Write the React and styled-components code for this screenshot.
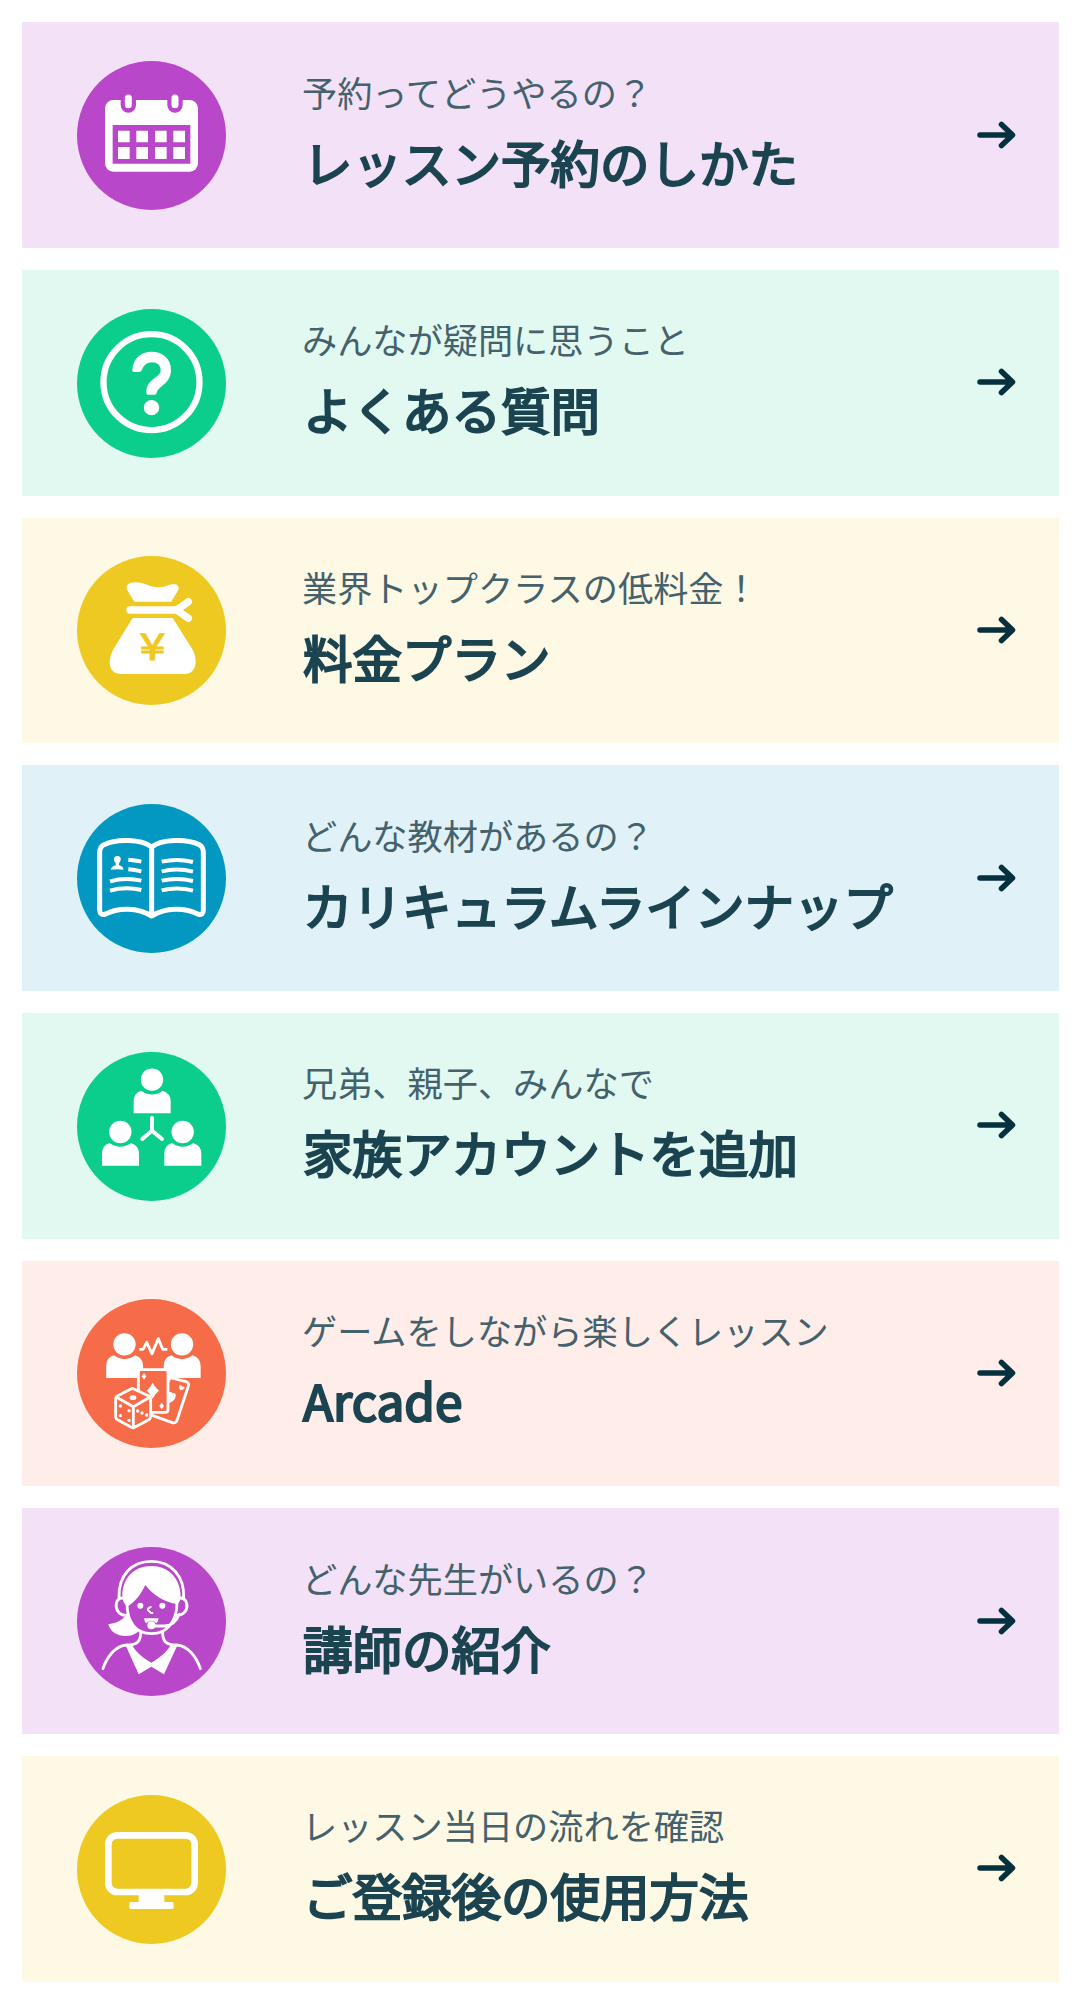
import styled, { createGlobalStyle } from "styled-components";

const GlobalStyle = createGlobalStyle`
  * {
    box-sizing: border-box;
  }

  body {
    margin: 0;
    background-color: #fff;
    font-family: "Noto Sans CJK JP", "Noto Sans", sans-serif;
  }
`;

const MenuList = styled.nav`
  display: flex;
  flex-direction: column;
  gap: 22px;
  padding: 22.3px 21px 22px 22px;
`;

const MenuItem = styled.a`
  display: flex;
  align-items: center;
  height: 225.7px;
  padding: 0 42px 0 55px;
  background-color: ${(props) => props.$background};
  color: #1b4450;
  text-decoration: none;
`;

const IconCircle = styled.svg`
  flex: none;
  width: 149px;
  height: 149px;
  margin-top: 0.8px;
  margin-right: 76px;
  border-radius: 50%;
  background-color: ${(props) => props.$color};
  color: ${(props) => props.$color};
`;

const TextBlock = styled.div`
  flex: 1;
  padding-bottom: 1px;
  white-space: nowrap;
`;

const Lead = styled.p`
  margin: 0;
  font-size: 35.2px;
  line-height: 60px;
  color: #44616c;
`;

/* Regular outlines thickened with a stroke, the bold cut is too wide */
const Title = styled.h2`
  margin: 0;
  padding: 0 0 6px 1px;
  font-size: 49.5px;
  font-weight: 400;
  line-height: 80px;
  -webkit-text-stroke: 2.2px currentColor;
`;

const Arrow = styled.svg`
  flex: none;
  width: 40px;
  height: 30px;
  margin-bottom: 1px;
`;

function CalendarIcon() {
  return (
    <>
      <rect x="105" y="144" width="279" height="215" rx="25" fill="#fff" />
      <path
        d="M175 128V159M315 128V159"
        stroke="currentColor"
        strokeWidth="46"
        strokeLinecap="round"
      />
      <path
        d="M175 138V158M315 138V158"
        stroke="#fff"
        strokeWidth="21"
        strokeLinecap="round"
      />
      <path d="M128 219H361V335H128Z" fill="currentColor" />
      {[144, 199, 255, 310].map((x) => (
        <path
          key={x}
          d={`M${x} 236h35v35h-35zM${x} 285h35v36h-35z`}
          fill="#fff"
        />
      ))}
    </>
  );
}

function QuestionIcon() {
  return (
    <>
      <circle
        cx="244.5"
        cy="246.5"
        r="144"
        fill="none"
        stroke="#fff"
        strokeWidth="19"
      />
      <path
        d="M187 208C190 175 212 155 245 155C280 155 303 178 303 210C303 234 290 246 279 256C266 266 262 271 260 279Q259 284 254 284H234Q229 284 229 278C229 260 235 249 249 238C262 228 272 223 272 210C272 196 261 187 246 187C231 187 222 195 215 211Q213 216 207 216H192Q186 216 187 208Z"
        fill="#fff"
      />
      <circle cx="244.5" cy="323" r="23" fill="#fff" />
    </>
  );
}

function MoneyIcon() {
  return (
    <>
      <path
        d="M193 170L172 136C165 121 176 112 195 112C225 112 240 128 268 127C288 126 298 117 312 117Q328 119 326 133L304 170ZM188 219H308L367 313Q377 330 377 350Q375 386 343 387H154Q119 386 119 350Q120 330 130 313Z"
        fill="#fff"
      />
      <path
        d="M180 195H322M355 170L320 195L355 220"
        fill="none"
        stroke="#fff"
        strokeWidth="22"
        strokeLinecap="round"
        strokeLinejoin="round"
      />
      <text
        transform="translate(247.5 344) scale(1.25 1)"
        textAnchor="middle"
        fontFamily="Noto Sans CJK JP, sans-serif"
        fontSize="112"
        fontWeight="400"
        fill="currentColor"
        stroke="currentColor"
        strokeWidth="3"
      >
        ¥
      </text>
    </>
  );
}

function BookIcon() {
  return (
    <>
      <path
        d="M245 156C215 132 140 130 102 149Q89 156 89 172V346Q90 361 105 358C145 337 203 337 245 363C287 337 345 337 385 358Q400 361 400 346V172Q400 156 388 149C350 130 275 132 245 156V363"
        fill="none"
        stroke="#fff"
        strokeWidth="15"
        strokeLinejoin="round"
      />
      <path
        d="M175 194Q195 196 214 200M175 223Q195 225 214 229M120 259Q167 246 214 257M120 287Q167 274 214 285M275 200Q322 189 369 201M275 229Q322 218 369 230M275 257Q322 246 369 258M275 286Q322 275 369 287"
        fill="none"
        stroke="#fff"
        strokeWidth="12"
      />
      <path
        d="M123 224Q123 215 137 211V205C127 192 133 183 142 183C152 183 157 192 147 205V211Q161 215 160 224Q142 221 123 224Z"
        fill="#fff"
      />
    </>
  );
}

function Person({ x, y }) {
  return (
    <g transform={`translate(${x} ${y})`} fill="#fff">
      <circle r="33.500" />
      <path d="M-55 101V65Q-55 40 -32 33Q0 56 32 33Q56 41 56 65V101Z" />
    </g>
  );
}

function FamilyIcon() {
  return (
    <>
      <Person x={246} y={119} />
      <Person x={151} y={276} />
      <Person x={338} y={276} />
      <path
        d="M246 234V272L217 297M246 272L276 297"
        fill="none"
        stroke="#fff"
        strokeWidth="12"
        strokeLinecap="round"
      />
    </>
  );
}

function ArcadeIcon() {
  return (
    <>
      <Person x={163.500} y={163} />
      <Person x={336} y={163} />
      <path
        d="M208 178H219L230 157L246 191L265 146L278 178H292"
        fill="none"
        stroke="#fff"
        strokeWidth="8.500"
        strokeLinejoin="round"
      />
      <g
        fill="currentColor"
        stroke="#fff"
        strokeWidth="8.500"
        strokeLinejoin="round"
      >
        <path d="M301 263L348 275Q358 278 355 288L321 391Q317 401 307 398L240 374Z" />
        <rect x="205" y="239" width="89" height="128" rx="8" />
        <path d="M187 295L235 317Q242 320 242 328V378Q242 386 235 390L194 412Q190 415 184 412L144 390Q137 387 137 380V326Q137 320 143 317Z" />
        <path d="M140 322L190 350L239 322M190 350V412" fill="none" />
      </g>
      <g fill="#fff">
        <path d="M248 278Q255 292 267 302Q255 311 248 326Q241 311 230 302Q242 291 248 278ZM222 249L229 259L222 269L215 259ZM275 338L282 348L275 358L268 348ZM327 287Q334 283 336 290Q344 288 344 294Q342 299 331 301Q326 294 327 287ZM297 307Q305 304 307 309Q319 307 317 319Q314 334 297 340Z" />
        <ellipse cx="189" cy="323" rx="10" ry="7" />
        <circle cx="151" cy="348" r="5" />
        <circle cx="177" cy="362" r="5" />
        <circle cx="151" cy="377" r="5" />
        <circle cx="177" cy="391" r="5" />
        <circle cx="203" cy="363" r="5" />
        <circle cx="216" cy="369" r="5" />
        <circle cx="230" cy="375" r="5" />
      </g>
    </>
  );
}

function TeacherIcon() {
  return (
    <>
      <path
        d="M176 212C166 214 157 200 157 183C157 128 193 93 244 93C296 93 332 130 332 186Q331 201 322 207C284 202 249 181 226 150C212 180 196 199 176 212ZM169 238C156 259 135 265 115 268C122 293 144 304 169 303C188 302 199 295 207 287C191 273 182 258 175 240ZM165 327H185C195 349 217 368 244 383C270 368 293 349 304 327H324L282 418L244 395L206 418Z"
        fill="#fff"
      />
      <path
        d="M147 190C144 119 187 79 244 79C302 79 344 121 341 190M157 189C137 190 134 215 144 229C151 239 160 242 172 240M332 189C353 191 355 217 345 230Q336 242 318 240M171 205C171 262 197 296 245 296C291 296 320 260 321 205M328 238C317 265 302 273 283 273H244M212 289C213 317 204 330 170 330C137 332 111 365 99 401M278 289C277 317 286 330 320 330C353 332 379 365 391 401"
        fill="none"
        stroke="#fff"
        strokeWidth="8.500"
        strokeLinecap="round"
      />
      <path
        d="M242 216C234 219 232 224 235 227C240 227 240 236 247 234"
        fill="none"
        stroke="#fff"
        strokeWidth="6"
        strokeLinecap="round"
      />
      <path
        d="M222 250H266Q265 259 260 265Q244 249 228 265Q223 259 222 250Z"
        fill="#fff"
      />
      <circle cx="244" cy="271" r="12" fill="#fff" />
      <circle cx="211" cy="212" r="9" fill="#fff" />
      <circle cx="277" cy="212" r="9" fill="#fff" />
    </>
  );
}

function MonitorIcon() {
  return (
    <>
      <rect
        x="115"
        y="151"
        width="259"
        height="170"
        rx="27"
        fill="none"
        stroke="#fff"
        strokeWidth="20"
      />
      <path
        d="M206 328H283V351H306Q311 351 311 356V367Q311 372 306 372H183Q178 372 178 367V356Q178 351 183 351H206Z"
        fill="#fff"
      />
    </>
  );
}

const menuItems = [
  {
    lead: "予約ってどうやるの？",
    title: "レッスン予約のしかた",
    Icon: CalendarIcon,
    viewBox: "21 27 447 447",
    color: "#b947c9",
    background: "#f3e1f7",
  },
  {
    lead: "みんなが疑問に思うこと",
    title: "よくある質問",
    Icon: QuestionIcon,
    viewBox: "21 27 447 447",
    color: "#0cce8c",
    background: "#e1f9f1",
  },
  {
    lead: "業界トップクラスの低料金！",
    title: "料金プラン",
    Icon: MoneyIcon,
    viewBox: "21 33 447 447",
    color: "#edc922",
    background: "#fef9e4",
  },
  {
    lead: "どんな教材があるの？",
    title: "カリキュラムラインナップ",
    Icon: BookIcon,
    viewBox: "21 27 447 447",
    color: "#0298c1",
    background: "#e0f1f8",
  },
  {
    lead: "兄弟、親子、みんなで",
    title: "家族アカウントを追加",
    Icon: FamilyIcon,
    viewBox: "21 36 447 447",
    color: "#0cce8c",
    background: "#e1f9f1",
  },
  {
    lead: "ゲームをしながら楽しくレッスン",
    title: "Arcade",
    Icon: ArcadeIcon,
    viewBox: "21 27 447 447",
    color: "#f66b48",
    background: "#ffede9",
  },
  {
    lead: "どんな先生がいるの？",
    title: "講師の紹介",
    Icon: TeacherIcon,
    viewBox: "21 36 447 447",
    color: "#b947c9",
    background: "#f3e1f7",
  },
  {
    lead: "レッスン当日の流れを確認",
    title: "ご登録後の使用方法",
    Icon: MonitorIcon,
    viewBox: "21 30 447 447",
    color: "#edc922",
    background: "#fef9e4",
  },
];

function App() {
  return (
    <>
      <GlobalStyle />
      <MenuList lang="ja">
        {menuItems.map(({ lead, title, Icon, viewBox, color, background }) => (
          <MenuItem key={title} href="#" $background={background}>
            <IconCircle viewBox={viewBox} $color={color}>
              <Icon />
            </IconCircle>
            <TextBlock>
              <Lead>{lead}</Lead>
              <Title>{title}</Title>
            </TextBlock>
            <Arrow viewBox="0 0 40 30" fill="none">
              <path
                d="M3 15H35M24.500 4.500L35.500 15L24.500 25.500"
                stroke="#04313d"
                strokeWidth="5.500"
                strokeLinecap="round"
                strokeLinejoin="round"
              />
            </Arrow>
          </MenuItem>
        ))}
      </MenuList>
    </>
  );
}

export default App;
